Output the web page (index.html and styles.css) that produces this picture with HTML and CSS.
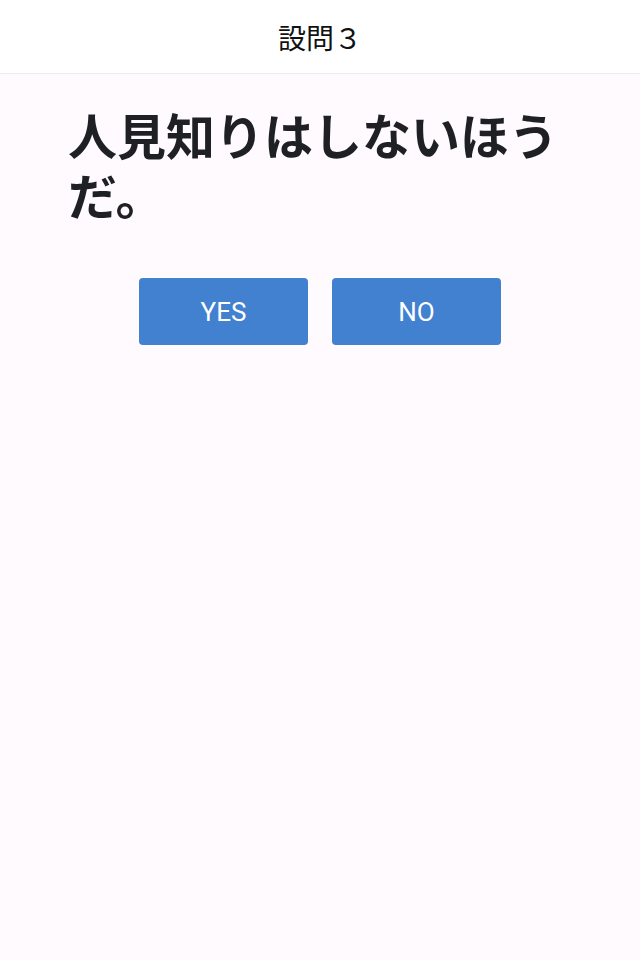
FILE: index.html
```html
<!DOCTYPE html>
<html lang="ja">
<head>
<meta charset="utf-8">
<title>設問3</title>
<link rel="stylesheet" href="styles.css">
</head>
<body>
<header class="topbar">
  <h1 class="topbar-title">設問３</h1>
</header>
<main class="content">
  <p class="question">人見知りはしないほうだ。</p>
  <div class="answers">
    <button class="answer-btn" type="button">YES</button>
    <button class="answer-btn" type="button">NO</button>
  </div>
</main>
</body>
</html>
```
FILE: styles.css
```css
html, body {
  margin: 0;
  padding: 0;
}
body {
  background: #fefafd;
  font-family: "Noto Sans CJK JP", "Noto Sans", sans-serif;
  color: #1d1f22;
  min-height: 960px;
}
.topbar {
  height: 74px;
  background: #ffffff;
  border-bottom: 1px solid #ebebeb;
  display: flex;
  align-items: center;
  justify-content: center;
  box-sizing: border-box;
}
.topbar-title {
  margin: 0;
  font-size: 28px;
  font-weight: 400;
  color: #111;
  line-height: 1;
}
.content {
  padding: 30px 68px 0;
}
.question {
  margin: 0;
  font-size: 49px;
  font-weight: 700;
  line-height: 60px;
  color: #1e2023;
}
.answers {
  display: flex;
  justify-content: center;
  gap: 24px;
  margin-top: 54px;
}
.answer-btn {
  width: 169px;
  height: 67px;
  border: none;
  border-radius: 4px;
  background: #4280d0;
  color: #ffffff;
  font-family: Roboto, "Noto Sans", sans-serif;
  font-size: 26px;
  font-weight: 400;
  padding: 0;
}
```
